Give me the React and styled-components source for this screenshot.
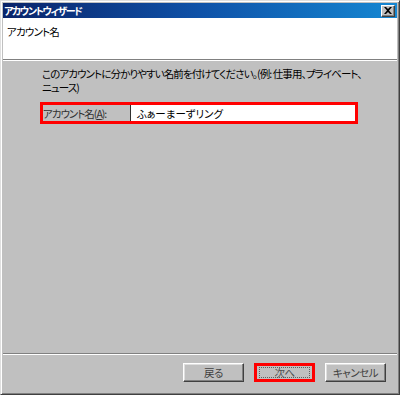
import React from "react";
import styled, { createGlobalStyle } from "styled-components";

const GlobalStyle = createGlobalStyle`
  html, body { margin: 0; padding: 0; background: #c0c0c0; }
  body {
    font-family: "Noto Sans CJK JP", "Noto Sans", sans-serif;
    font-size: 11px;
    font-feature-settings: "palt";
    -webkit-font-smoothing: antialiased;
  }
`;

const Window = styled.div`
  box-sizing: border-box;
  width: 400px;
  height: 395px;
  display: flex;
  flex-direction: column;
  padding: 2px;
  background: #c0c0c0;
  border: 1px solid;
  border-color: #dfdfdf #404040 #404040 #dfdfdf;
  box-shadow: inset 1px 1px #ffffff, inset -1px -1px #808080;
`;

const TitleBar = styled.div`
  height: 15px;
  flex: none;
  display: flex;
  align-items: center;
  justify-content: space-between;
  padding: 0 2px 0 1px;
  background: linear-gradient(90deg, #0a246a 0%, #0f52a8 50%, #1587d2 100%);
`;

const TitleText = styled.span`
  color: #ffffff;
  font-weight: bold;
  font-size: 10px;
  line-height: 15px;
  letter-spacing: -1.4px;
  white-space: nowrap;
`;

const CloseButton = styled.div`
  box-sizing: border-box;
  width: 14px;
  height: 12px;
  display: flex;
  align-items: center;
  justify-content: center;
  background: #c0c0c0;
  border: 1px solid;
  border-color: #ffffff #404040 #404040 #ffffff;
  box-shadow: inset -1px -1px #808080;
`;

const Header = styled.div`
  height: 41px;
  flex: none;
  box-sizing: border-box;
  background: #ffffff;
  padding: 7px 4px 0;
  color: #000;
  font-size: 10.5px;
  line-height: 14px;
  letter-spacing: -0.8px;
`;

const Etched = styled.div`
  flex: none;
  height: 0;
  border-top: 1px solid #808080;
  border-bottom: 1px solid #ffffff;
`;

const Body = styled.div`
  flex: 1;
  padding: 6px 0 0 37px;
  display: flex;
  flex-direction: column;
`;

const Description = styled.p`
  margin: 0 0 0 2px;
  color: #000;
  font-size: 10.5px;
  line-height: 14px;
  letter-spacing: -0.9px;
  white-space: nowrap;
`;

const FieldRow = styled.div`
  box-sizing: border-box;
  width: 318px;
  height: 22px;
  margin-top: 7px;
  border: 3px solid #ff0000;
  display: flex;
  align-items: stretch;
`;

const Label = styled.div`
  width: 87px;
  flex: none;
  display: flex;
  align-items: center;
  color: #303030;
  font-size: 10.5px;
  letter-spacing: -1px;
  white-space: nowrap;
`;

const Underline = styled.span`
  text-decoration: underline;
`;

const Field = styled.div`
  flex: 1;
  background: #ffffff;
  border-left: 1px solid #303030;
  display: flex;
  align-items: center;
  padding-left: 6px;
  color: #000;
  font-size: 10.5px;
  white-space: nowrap;
`;

const Footer = styled.div`
  flex: none;
  height: 37px;
  box-sizing: border-box;
  padding: 8px 11px 0 0;
  display: flex;
  justify-content: flex-end;
  gap: 10px;
`;

const Button = styled.div`
  box-sizing: border-box;
  width: 61px;
  height: 19px;
  display: flex;
  align-items: center;
  justify-content: center;
  background: #c0c0c0;
  color: #404040;
  font-size: 10.5px;
  letter-spacing: -0.5px;
  border: ${(p) => (p.$highlight ? "3px solid #ff0000" : "1px solid")};
  border-color: ${(p) =>
    p.$highlight ? "#ff0000" : "#ffffff #404040 #404040 #ffffff"};
  box-shadow: ${(p) =>
    p.$highlight ? "none" : "inset -1px -1px #808080, inset 1px 1px #dfdfdf"};
`;

const FocusRect = styled.span`
  box-sizing: border-box;
  display: flex;
  align-items: center;
  justify-content: center;
  width: 51px;
  height: 11px;
  border: 1px dotted #606060;
  color: #505050;
`;

export default function App() {
  return (
    <>
      <GlobalStyle />
      <Window>
        <TitleBar>
          <TitleText>アカウントウィザード</TitleText>
          <CloseButton>
            <svg width="8" height="7" viewBox="0 0 8 7">
              <path
                d="M0 0h2l2 2 2-2h2L5 3.5 8 7H6L4 5 2 7H0l3-3.5z"
                fill="#000"
              />
            </svg>
          </CloseButton>
        </TitleBar>
        <Header>アカウント名</Header>
        <Etched />
        <Body>
          <Description>
            このアカウントに分かりやすい名前を付けてください。(例: 仕事用、プライベート、
            <br />
            ニュース)
          </Description>
          <FieldRow>
            <Label>
              アカウント名(<Underline>A</Underline>):
            </Label>
            <Field>ふぁーまーずリング</Field>
          </FieldRow>
        </Body>
        <Etched />
        <Footer>
          <Button>戻る</Button>
          <Button $highlight>
            <FocusRect>次へ</FocusRect>
          </Button>
          <Button>キャンセル</Button>
        </Footer>
      </Window>
    </>
  );
}
